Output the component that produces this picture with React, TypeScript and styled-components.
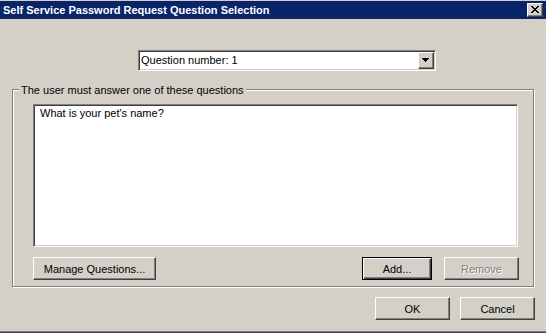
import React from "react";
import styled, { createGlobalStyle, css } from "styled-components";

const GlobalStyle = createGlobalStyle`
  html, body { margin: 0; padding: 0; background: #d4d0c8; }
  body { font-family: "Liberation Sans", Arial, sans-serif; font-size: 11px; color: #000; }
  * { box-sizing: border-box; }
`;

const Window = styled.div`
  width: 546px;
  height: 333px;
  background: #d4d0c8;
  display: flex;
  flex-direction: column;
  padding-top: 1px;
  border-bottom: 1px solid #404040;
  box-shadow: inset 0 -1px 0 #808080;
`;

const TitleBar = styled.div`
  height: 18px;
  background: #0a246a;
  display: flex;
  align-items: center;
  justify-content: space-between;
  padding: 0 3px 0 3px;
`;

const TitleText = styled.span`
  color: #fff;
  font-weight: bold;
  font-size: 11px;
  line-height: 13px;
`;

const raised = css`
  background: #d4d0c8;
  border-style: solid;
  border-width: 1px;
  border-color: #fff #404040 #404040 #fff;
  box-shadow: inset -1px -1px 0 #808080;
`;

const CloseButton = styled.div`
  ${raised};
  width: 16px;
  height: 14px;
  display: flex;
  align-items: center;
  justify-content: center;
  padding: 0 1px 1px 0;
`;

const Body = styled.div`
  display: flex;
  flex-direction: column;
`;

const Combo = styled.div`
  margin: 31px 0 0 138px;
  width: 298px;
  height: 21px;
  background: #fff;
  display: flex;
  align-items: stretch;
  border-style: solid;
  border-width: 1px;
  border-color: #808080 #fff #fff #808080;
  box-shadow: inset 1px 1px 0 #404040, inset -1px -1px 0 #d4d0c8;
  padding: 1px;
`;

const ComboText = styled.div`
  flex: 1;
  padding-left: 1px;
  line-height: 17px;
  white-space: nowrap;
`;

const DropButton = styled.div`
  ${raised};
  width: 16px;
  display: flex;
  align-items: center;
  justify-content: center;
  padding: 0 1px 1px 0;
`;

const Group = styled.div`
  position: relative;
  margin: 18px 0 0 12px;
  width: 522px;
  height: 198px;
  border: 1px solid #808080;
  box-shadow: inset 1px 1px 0 #fff, 1px 1px 0 #fff;
  padding: 14px 0 0 20px;
  display: flex;
  flex-direction: column;
`;

const Legend = styled.div`
  position: absolute;
  top: -6px;
  left: 6px;
  padding: 0 2px;
  background: #d4d0c8;
  line-height: 13px;
  white-space: nowrap;
`;

const ListBox = styled.div`
  width: 485px;
  height: 143px;
  background: #fff;
  border-style: solid;
  border-width: 1px;
  border-color: #808080 #fff #fff #808080;
  box-shadow: inset 1px 1px 0 #404040, inset -1px -1px 0 #d4d0c8;
  padding: 2px 6px;
  line-height: 13px;
`;

const ButtonRow = styled.div`
  width: 486px;
  margin-top: 10px;
  display: flex;
  align-items: center;
`;

const Spacer = styled.div`
  flex: 1;
`;

const Button = styled.div<{ $w?: number; $default?: boolean; $disabled?: boolean }>`
  width: ${(p) => p.$w ?? 75}px;
  height: 23px;
  display: flex;
  align-items: center;
  justify-content: center;
  white-space: nowrap;
  ${raised};
  ${(p) =>
    p.$default &&
    css`
      border: 1px solid #000;
      box-shadow: inset 1px 1px 0 #fff, inset -1px -1px 0 #404040,
        inset -2px -2px 0 #808080;
    `}
  ${(p) =>
    p.$disabled &&
    css`
      color: #808080;
      text-shadow: 1px 1px 0 #fff;
    `}
`;

const BottomRow = styled.div`
  display: flex;
  justify-content: flex-end;
  gap: 10px;
  margin-top: 10px;
  padding-right: 11px;
`;

export default function App() {
  return (
    <>
      <GlobalStyle />
      <Window>
        <TitleBar>
          <TitleText>Self Service Password Request Question Selection</TitleText>
          <CloseButton>
            <svg width="8" height="7" viewBox="0 0 8 7" shapeRendering="crispEdges">
              <path
                d="M0 0h2v1H0zM6 0h2v1H6zM1 1h2v1H1zM5 1h2v1H5zM2 2h4v1H2zM3 3h2v1H3zM2 4h4v1H2zM1 5h2v1H1zM5 5h2v1H5zM0 6h2v1H0zM6 6h2v1H6z"
                fill="#000"
              />
            </svg>
          </CloseButton>
        </TitleBar>
        <Body>
          <Combo>
            <ComboText>Question number: 1</ComboText>
            <DropButton>
              <svg width="7" height="4" viewBox="0 0 7 4" shapeRendering="crispEdges">
                <path d="M0 0h7v1H0zM1 1h5v1H1zM2 2h3v1H2zM3 3h1v1H3z" fill="#000" />
              </svg>
            </DropButton>
          </Combo>
          <Group>
            <Legend>The user must answer one of these questions</Legend>
            <ListBox>What is your pet's name?</ListBox>
            <ButtonRow>
              <Button $w={123}>Manage Questions...</Button>
              <Spacer />
              <Button $w={70} $default>
                Add...
              </Button>
              <Spacer style={{ flex: "0 0 12px" }} />
              <Button $disabled>Remove</Button>
            </ButtonRow>
          </Group>
          <BottomRow>
            <Button>OK</Button>
            <Button>Cancel</Button>
          </BottomRow>
        </Body>
      </Window>
    </>
  );
}
